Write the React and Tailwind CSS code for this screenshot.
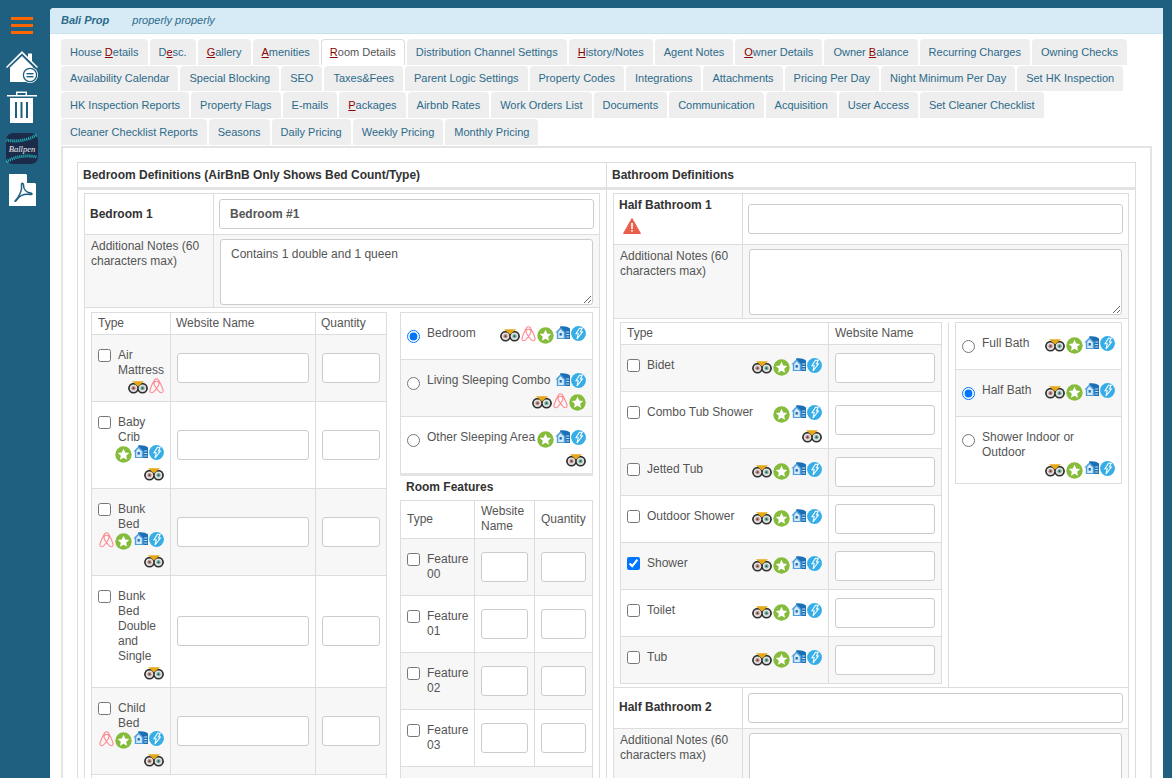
import React from 'react';

const firstTabs = [
    ['House Details', 6], ['Desc.', 1], ['Gallery', 0], ['Amenities', 0], ['Room Details', 0],
    ['Distribution Channel Settings'], ['History/Notes', 0], ['Agent Notes'], ['Owner Details', 0], ['Owner Balance', 6],
    ['Recurring Charges'], ['Owning Checks'], ['Availability Calendar'], ['Special Blocking'], ['SEO'],
    ['Taxes&Fees'], ['Parent Logic Settings'], ['Property Codes'], ['Integrations'], ['Attachments'],
    ['Pricing Per Day'], ['Night Minimum Per Day'], ['Set HK Inspection'], ['HK Inspection Reports'], ['Property Flags'],
    ['E-mails'], ['Packages', 0], ['Airbnb Rates'], ['Work Orders List'], ['Documents'],
    ['Communication'], ['Acquisition'], ['User Access'], ['Set Cleaner Checklist'], ['Cleaner Checklist Reports'],
    ['Seasons'], ['Daily Pricing'], ['Weekly Pricing'], ['Monthly Pricing'],
];

const Owl = () => (
    <svg width="20" height="13" viewBox="0 0 20 13" className="mt-[3px] shrink-0">
        <circle cx="5.5" cy="7.2" r="5.4" fill="#2f2f2f" />
        <circle cx="14.5" cy="7.2" r="5.4" fill="#2f2f2f" />
        <path d="M4 0.3 L16 0.3 L10 5.5 Z" fill="#e6a817" />
        <circle cx="5.5" cy="7.2" r="3.7" fill="#e2e2e2" />
        <circle cx="14.5" cy="7.2" r="3.7" fill="#e2e2e2" />
        <circle cx="5.5" cy="7.2" r="2.1" fill="#c98a80" />
        <circle cx="14.5" cy="7.2" r="2.1" fill="#6fb5a5" />
        <circle cx="5.5" cy="7.2" r="0.9" fill="#444" />
        <circle cx="14.5" cy="7.2" r="0.9" fill="#444" />
    </svg>
);

const Air = () => (
    <svg width="15" height="16" viewBox="0 0 15 16" className="shrink-0" fill="none" stroke="#ff8a93" strokeWidth="1.1">
        <path d="M7.5 10.5 C5.8 8.2 5 6.8 5 5.4 C5 4 6 3.2 7.5 3.2 C9 3.2 10 4 10 5.4 C10 6.8 9.2 8.2 7.5 10.5 C5.5 13 4.3 14.8 2.8 14.8 C1.3 14.8 0.6 13.4 1 12 C1.7 9.4 4 4.6 5.6 1.9 C6.2 1 6.8 0.7 7.5 0.7 C8.2 0.7 8.8 1 9.4 1.9 C11 4.6 13.3 9.4 14 12 C14.4 13.4 13.7 14.8 12.2 14.8 C10.7 14.8 9.5 13 7.5 10.5 Z" />
    </svg>
);

const Star = () => (
    <svg width="17" height="17" viewBox="0 0 17 17" className="mt-[1px] shrink-0">
        <circle cx="8.5" cy="8.5" r="8.2" fill="#86bc3b" />
        <path d="M8.5 2.8 L10.2 6.5 L14.2 7 L11.2 9.7 L12 13.7 L8.5 11.7 L5 13.7 L5.8 9.7 L2.8 7 L6.8 6.5 Z" fill="#fff" />
    </svg>
);

const House = () => (
    <svg width="15" height="14" viewBox="0 0 15 14" className="shrink-0">
        <path d="M5 0.5 C9 0 12.5 0.5 15 2.5 L15 13 L5 13 Z" fill="#1b6fb5" />
        <path d="M0.3 6.5 L5.5 1.2 L10.5 6.2 L10.5 13 L1.8 13 L1.8 6.5 Z" fill="#4f9fdc" />
        <path d="M5.5 3.2 L8.8 6.5 L8.8 12 L3.2 12 L3.2 6 Z" fill="#d5e9f7" />
        <rect x="4.6" y="7" width="2.2" height="2.6" fill="#1b6fb5" />
        <rect x="11.2" y="5.5" width="3" height="1" fill="#cfe4f5" />
        <rect x="11.2" y="8" width="3" height="1" fill="#cfe4f5" />
        <rect x="11.2" y="10.5" width="3" height="1" fill="#cfe4f5" />
    </svg>
);

const Bolt = () => (
    <svg width="15" height="15" viewBox="0 0 15 15" className="shrink-0">
        <circle cx="7.5" cy="7.5" r="7.4" fill="#35aee8" />
        <path d="M8.5 2.2 L11.2 2.2 L9.4 6 L11.4 6 L6 13 L7.2 7.8 L5 7.8 Z" fill="none" stroke="#fff" strokeWidth="1.1" />
    </svg>
);

const iconMap = { o: Owl, a: Air, s: Star, h: House, b: Bolt };

const Icons = ({ set, className = '' }) => (
    <div className={`flex items-start justify-end gap-[1px] ${className}`}>
        {set.split('').map((k, i) => {
            const Ico = iconMap[k];
            return <Ico key={i} />;
        })}
    </div>
);

const Input = ({ className = '' }) => (
    <input readOnly className={`block h-[30px] rounded-[3px] border border-[#ccc] bg-white ${className}`} />
);

const Tab = ({ label, hot, active }) => (
    <div className={`flex h-[25.67px] items-center rounded-t-[4px] text-[11px] ${active ? 'border border-b-0 border-[#ddd] bg-white px-[8px] text-[#555]' : 'bg-[#eeeeee] px-[9px] text-[#2c6a8a]'}`}>
        {hot === undefined ? label : (
            <span>
                {label.slice(0, hot)}
                <span className="text-[#8b0000] underline">{label[hot]}</span>
                {label.slice(hot + 1)}
            </span>
        )}
    </div>
);

// row of the small type tables on the left
const BedRow = ({ name, icons, icons2, h, striped }) => (
    <div className={`flex border-t border-[#ddd] ${striped ? 'bg-[#f7f7f7]' : ''}`} style={{ height: h }}>
        <div className="w-[79px] shrink-0 border-r border-[#ddd] pl-[6px] pr-[6px] pt-[13px]">
            <div className="flex">
                <input type="checkbox" readOnly className="mt-[1px] h-[13px] w-[13px] shrink-0" />
                <span className="ml-[7px] leading-[15px]">{name}</span>
            </div>
            {icons && <Icons set={icons} className="-ml-[6px]" />}
            {icons2 && <Icons set={icons2} className="mt-[2px]" />}
        </div>
        <div className="flex w-[145px] shrink-0 items-center justify-center border-r border-[#ddd]">
            <Input className="w-[132px]" />
        </div>
        <div className="flex flex-1 items-center justify-center">
            <Input className="w-[58px]" />
        </div>
    </div>
);

const OptionRow = ({ name, icons, icons2, h, checked, striped, top = false, lowGap = 'mt-[3px]' }) => (
    <div className={`${top ? '' : 'border-t border-[#ddd]'} pl-[6px] pr-[6px] pt-[13px] ${striped ? 'bg-[#f7f7f7]' : ''}`} style={{ height: h }}>
        <div className="flex items-start">
            <input type="radio" readOnly checked={checked} className="mt-[4px] h-[13px] w-[13px] shrink-0" />
            <span className="ml-[7px] leading-[15px]">{name}</span>
            {icons && <Icons set={icons} className="ml-auto" />}
        </div>
        {icons2 && <Icons set={icons2} className={lowGap} />}
    </div>
);

const FeatureRow = ({ name, striped }) => (
    <div className={`flex h-[57px] border-t border-[#ddd] ${striped ? 'bg-[#f7f7f7]' : ''}`}>
        <div className="flex w-[74px] shrink-0 border-r border-[#ddd] pl-[6px] pt-[13px]">
            <input type="checkbox" readOnly className="mt-[1px] h-[13px] w-[13px] shrink-0" />
            <span className="ml-[7px] leading-[15px]">{name}</span>
        </div>
        <div className="flex w-[60px] shrink-0 items-center justify-center border-r border-[#ddd]">
            <Input className="w-[47px]" />
        </div>
        <div className="flex flex-1 items-center justify-center">
            <Input className="w-[45px]" />
        </div>
    </div>
);

const BathRow = ({ name, icons, icons2, h, striped, checked }) => (
    <div className={`flex border-t border-[#ddd] ${striped ? 'bg-[#f7f7f7]' : ''}`} style={{ height: h }}>
        <div className="w-[208px] shrink-0 border-r border-[#ddd] pl-[6px] pr-[6px] pt-[13px]">
            <div className="flex items-start">
                <input type="checkbox" readOnly checked={checked} className="mt-[1px] h-[13px] w-[13px] shrink-0" />
                <span className="ml-[7px] leading-[15px]">{name}</span>
                <Icons set={icons} className="ml-auto" />
            </div>
            {icons2 && <Icons set={icons2} className="mt-[4px]" />}
        </div>
        <div className="flex flex-1 items-center justify-center">
            <Input className="w-[100px]" />
        </div>
    </div>
);

const NotesLabel = () => <div className="leading-[15px]">Additional Notes (60 characters max)</div>;

const Sidebar = () => (
    <div className="flex w-[44px] shrink-0 flex-col items-center">
        <div className="mt-[17px] flex w-[22px] flex-col gap-[4px]">
            <div className="h-[3px] bg-[#ff6600]" />
            <div className="h-[3px] bg-[#ff6600]" />
            <div className="h-[3px] bg-[#ff6600]" />
        </div>
        <svg width="33" height="32" viewBox="0 0 33 32" className="mt-[17px]">
            <path d="M0 16 L16 0 L22 6 L22 2.5 L26 2.5 L26 10 L32 16 L31 17 L16 2.5 L1 17 Z" fill="#fff" />
            <path d="M4 16.5 L16 5 L27 16 L27 31 L4 31 Z" fill="#fff" />
            <circle cx="24" cy="24" r="8" fill="#fff" />
            <circle cx="24" cy="24" r="6.6" fill="#fff" stroke="#1f5f7f" strokeWidth="1.3" />
            <rect x="20.5" y="22" width="7" height="1.4" fill="#1f5f7f" />
            <rect x="20.5" y="25" width="7" height="1.4" fill="#1f5f7f" />
        </svg>
        <svg width="30" height="33" viewBox="0 0 30 33" className="mt-[8px]">
            <path d="M0 4 L9 4 L9 0.5 L20 0.5 L20 4 L30 4 L30 5.4 L0 5.4 Z M10.5 4 L18.5 4 L18.5 2 L10.5 2 Z" fill="#fff" fillRule="evenodd" />
            <path d="M3 7 L26 7 L26 32 L3 32 Z" fill="#fff" />
            <rect x="8" y="11" width="2" height="16" fill="#1f5f7f" />
            <rect x="13.5" y="11" width="2" height="16" fill="#1f5f7f" />
            <rect x="19" y="11" width="2" height="16" fill="#1f5f7f" />
        </svg>
        <svg width="32" height="32" viewBox="0 0 32 32" className="mt-[9px]">
            <rect width="32" height="31" rx="7" fill="#1c2b4a" />
            <path d="M0.5 7 C8 9 22 8 31 1.5" fill="none" stroke="#22c4c4" strokeWidth="3" strokeDasharray="1 1" />
            <path d="M0.5 29 C8 23 22 22 31 24" fill="none" stroke="#22c4c4" strokeWidth="3" strokeDasharray="1 1" />
            <text x="16" y="19" textAnchor="middle" fontSize="8.5" fontStyle="italic" fontFamily="'Liberation Serif', serif" fill="#f0f0f0">Ballpen</text>
        </svg>
        <svg width="27" height="32" viewBox="0 0 27 32" className="mt-[9px]">
            <path d="M0 0 L17 0 L27 10 L27 32 L0 32 Z" fill="#fff" />
            <path d="M18 0 L27 9 L18 9 Z" fill="#1f5f7f" />
            <path d="M6.5 26.5 C10 23 13.5 16 12.5 11 C12.2 8.5 14.5 9 14.5 11 C14.5 15 17 18.5 21.5 19 C23.5 19.2 23.5 20.8 21.5 20.5 C16 19.5 11 21 8 25.5 C6.5 28 5 27.5 6.5 26.5 Z" fill="none" stroke="#1f5f7f" strokeWidth="1.5" />
        </svg>
    </div>
);

const App = () => {
    return (
        <div className="flex h-[778px] overflow-hidden bg-[#1f5f7f] font-['Liberation_Sans',Arial,sans-serif] text-[12px] text-[#555]">
            <Sidebar />
            <div className="ml-[6px] mr-[9px] mt-[8px] flex-1 overflow-hidden rounded-tl-[4px] bg-white">
                {/* Header */}
                <div className="flex h-[26px] items-center border-b border-[#c9e2ee] bg-[#d6ebf5] pl-[11px] text-[11px] italic text-[#2c6a8a]">
                    <span className="font-bold">Bali Prop</span>
                    <span className="ml-[23px]">properly properly</span>
                </div>

                {/* Tabs */}
                <div className="ml-[11px] flex w-[1090px] flex-wrap gap-x-[2px] gap-y-[1px] pt-[5px]">
                    {firstTabs.map((t) => (
                        <Tab key={t[0]} label={t[0]} hot={t[1]} active={t[0] === 'Room Details'} />
                    ))}
                </div>

                {/* Panel */}
                <div className="ml-[11px] mt-[1.32px] w-[1091px] border-2 border-b-0 border-[#e3e3e3] px-[14px] pt-[14px]">
                    <div className="flex border border-[#ddd]">
                        {/* Bedrooms */}
                        <div className="w-[529px] shrink-0 border-r border-[#ddd]">
                            <div className="box-content flex h-[24px] items-center border-b-[3px] border-[#e3e3e3] pl-[5px] font-bold text-[#333]">
                                Bedroom Definitions (AirBnB Only Shows Bed Count/Type)
                            </div>
                            <div className="px-[6px] pt-[3px]">
                                <div className="border border-[#ddd]">
                                    <div className="flex h-[41px] border-b border-[#ddd]">
                                        <div className="flex w-[129px] shrink-0 items-center border-r border-[#ddd] pl-[5px] font-bold text-[#333]">Bedroom 1</div>
                                        <div className="flex flex-1 items-center pl-[5px]">
                                            <input readOnly value="Bedroom #1" className="h-[30px] w-[375px] rounded-[3px] border border-[#ccc] px-[10px] font-bold text-[#555]" />
                                        </div>
                                    </div>
                                    <div className="flex h-[72px] bg-[#f7f7f7]">
                                        <div className="w-[129px] shrink-0 border-r border-[#ddd] pl-[6px] pr-[4px] pt-[4px]">
                                            <NotesLabel />
                                        </div>
                                        <div className="flex-1 pl-[6px] pt-[4px]">
                                            <textarea readOnly value="Contains 1 double and 1 queen" className="block h-[66px] w-[373px] rounded-[3px] border border-[#ccc] bg-white px-[10px] py-[7px] leading-[15px]" />
                                        </div>
                                    </div>
                                    <div className="flex gap-[13px] border-t border-[#ddd] pl-[6px] pt-[4px]">
                                        <div className="w-[296px] shrink-0 border border-[#ddd]">
                                            <div className="flex h-[21px] items-center">
                                                <div className="flex h-full w-[79px] items-center border-r border-[#ddd] pl-[6px]">Type</div>
                                                <div className="flex h-full w-[145px] items-center border-r border-[#ddd] pl-[5px]">Website Name</div>
                                                <div className="pl-[5px]">Quantity</div>
                                            </div>
                                            <BedRow name="Air Mattress" icons="oa" h={67} striped />
                                            <BedRow name="Baby Crib" icons="shb" icons2="o" h={87} />
                                            <BedRow name="Bunk Bed" icons="ashb" icons2="o" h={87} striped />
                                            <BedRow name="Bunk Bed Double and Single" icons="o" h={112} />
                                            <BedRow name="Child Bed" icons="ashb" icons2="o" h={87} striped />
                                            <div className="h-[40px] border-t border-[#ddd]" />
                                        </div>
                                        <div className="w-[193px] shrink-0">
                                            <div className="border border-b-0 border-[#ddd]">
                                                <OptionRow top name="Bedroom" icons="oashb" h={46} checked />
                                                <OptionRow name="Living Sleeping Combo" icons="hb" icons2="oas" h={57} striped />
                                                <OptionRow name="Other Sleeping Area" icons="shb" icons2="o" h={57} />
                                            </div>
                                            <div className="border-t-[3px] border-[#e3e3e3]">
                                                <div className="flex h-[24px] items-center pb-[2px] pl-[6px] font-bold text-[#333]">Room Features</div>
                                                <div className="border border-[#ddd]">
                                                    <div className="flex h-[37px]">
                                                        <div className="flex w-[74px] items-center border-r border-[#ddd] pl-[6px]">Type</div>
                                                        <div className="flex w-[60px] items-center border-r border-[#ddd] pl-[6px] leading-[15px]">Website Name</div>
                                                        <div className="flex items-center pl-[6px]">Quantity</div>
                                                    </div>
                                                    <FeatureRow name="Feature 00" striped />
                                                    <FeatureRow name="Feature 01" />
                                                    <FeatureRow name="Feature 02" striped />
                                                    <FeatureRow name="Feature 03" />
                                                    <div className="h-[40px] border-t border-[#ddd] bg-[#f7f7f7]" />
                                                </div>
                                            </div>
                                        </div>
                                    </div>
                                </div>
                            </div>
                        </div>

                        {/* Bathrooms */}
                        <div className="flex-1">
                            <div className="box-content flex h-[24px] items-center border-b-[3px] border-[#e3e3e3] pl-[5px] font-bold text-[#333]">
                                Bathroom Definitions
                            </div>
                            <div className="px-[6px] pt-[3px]">
                                <div className="border border-[#ddd]">
                                    <div className="flex h-[51px] border-b border-[#ddd]">
                                        <div className="w-[129px] shrink-0 border-r border-[#ddd] pl-[5px] pt-[4px] font-bold text-[#333]">
                                            <div className="leading-[15px]">Half Bathroom 1</div>
                                            <svg width="18" height="16" viewBox="0 0 18 16" className="ml-[4px] mt-[5px]">
                                                <path d="M9 0.5 L17.5 15.5 L0.5 15.5 Z" fill="#e8604c" stroke="#e8604c" strokeLinejoin="round" />
                                                <rect x="8.2" y="5" width="1.6" height="6" fill="#fff" />
                                                <rect x="8.2" y="12" width="1.6" height="1.6" fill="#fff" />
                                            </svg>
                                        </div>
                                        <div className="flex flex-1 items-center pl-[5px]">
                                            <Input className="w-[375px]" />
                                        </div>
                                    </div>
                                    <div className="flex h-[73px] bg-[#f7f7f7]">
                                        <div className="w-[129px] shrink-0 border-r border-[#ddd] pl-[6px] pr-[4px] pt-[4px]">
                                            <NotesLabel />
                                        </div>
                                        <div className="flex-1 pl-[6px] pt-[4px]">
                                            <textarea readOnly className="block h-[66px] w-[373px] rounded-[3px] border border-[#ccc] bg-white" />
                                        </div>
                                    </div>
                                    <div className="flex border-t border-[#ddd] pl-[6px] pt-[3px]">
                                        <div className="mb-[3px] w-[322px] shrink-0 border border-[#ddd]">
                                            <div className="flex h-[21px]">
                                                <div className="flex w-[208px] items-center border-r border-[#ddd] pl-[6px]">Type</div>
                                                <div className="flex items-center pl-[6px]">Website Name</div>
                                            </div>
                                            <BathRow name="Bidet" icons="oshb" h={47} striped />
                                            <BathRow name="Combo Tub Shower" icons="shb" icons2="o" h={57} />
                                            <BathRow name="Jetted Tub" icons="oshb" h={47} striped />
                                            <BathRow name="Outdoor Shower" icons="oshb" h={47} />
                                            <BathRow name="Shower" icons="oshb" h={47} striped checked />
                                            <BathRow name="Toilet" icons="oshb" h={47} />
                                            <BathRow name="Tub" icons="oshb" h={47} striped />
                                        </div>
                                        <div className="w-[7px] shrink-0 border-r border-[#ddd]" />
                                        <div className="ml-[6px] h-[162px] w-[167px] shrink-0 border border-[#ddd]">
                                            <OptionRow top name="Full Bath" icons="oshb" h={46} />
                                            <OptionRow name="Half Bath" icons="oshb" h={47} striped checked />
                                            <OptionRow name="Shower Indoor or Outdoor" icons2="oshb" h={67} lowGap="mt-[1px]" />
                                        </div>
                                    </div>
                                    <div className="flex h-[42px] border-y border-[#ddd]">
                                        <div className="flex w-[129px] shrink-0 items-center border-r border-[#ddd] pb-[1px] pl-[5px] font-bold text-[#333]">Half Bathroom 2</div>
                                        <div className="flex flex-1 items-center pl-[5px]">
                                            <Input className="w-[375px]" />
                                        </div>
                                    </div>
                                    <div className="flex h-[72px] bg-[#f7f7f7]">
                                        <div className="w-[129px] shrink-0 border-r border-[#ddd] pl-[6px] pr-[4px] pt-[4px]">
                                            <NotesLabel />
                                        </div>
                                        <div className="flex-1 pl-[6px] pt-[4px]">
                                            <textarea readOnly className="block h-[66px] w-[373px] rounded-[3px] border border-[#ccc] bg-white" />
                                        </div>
                                    </div>
                                </div>
                            </div>
                        </div>
                    </div>
                </div>
            </div>
        </div>
    );
};

export default App;
